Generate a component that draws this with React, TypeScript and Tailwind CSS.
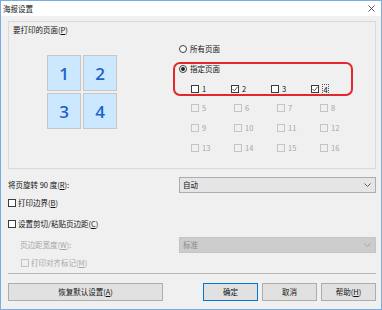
import React from "react";

const font = { fontFamily: '"Noto Sans CJK SC", "Noto Sans", sans-serif' };

function Check({ checked, disabled }: { checked?: boolean; disabled?: boolean }) {
  return (
    <div
      className={
        "w-[8px] h-[8px] border flex items-center justify-center shrink-0 " +
        (disabled ? "border-[#c4c4c4] bg-[#f0f0f0]" : "border-[#3c3c3c] bg-white")
      }
    >
      {checked && (
        <svg width="6" height="6" viewBox="0 0 6 6">
          <polyline points="0.5,3 2.3,4.8 5.6,0.8" fill="none" stroke="#555" strokeWidth="1" />
        </svg>
      )}
    </div>
  );
}

function Radio({ checked }: { checked?: boolean }) {
  return (
    <div className="w-[8px] h-[8px] rounded-full border border-[#3c3c3c] bg-white flex items-center justify-center shrink-0">
      {checked && <div className="w-[4px] h-[4px] rounded-full bg-[#222]" />}
    </div>
  );
}

function Acc({ k }: { k: string }) {
  return (
    <>
      (<span className="underline">{k}</span>)
    </>
  );
}

function PageCheck({ n, checked, disabled, focus }: { n: number; checked?: boolean; disabled?: boolean; focus?: boolean }) {
  return (
    <div className="w-[43px] flex items-center gap-[3px] h-[10px]">
      <Check checked={checked} disabled={disabled} />
      <span
        className={
          (disabled ? "text-[#a6a6a6] " : "text-[#111] ") +
          (focus ? "border border-dotted border-[#555] px-[0.5px] leading-[9px]" : "")
        }
      >
        {n}
      </span>
    </div>
  );
}

function Chevron({ color }: { color: string }) {
  return (
    <svg width="7" height="4" viewBox="0 0 7 4">
      <polyline points="0.5,0.5 3.5,3.5 6.5,0.5" fill="none" stroke={color} strokeWidth="0.9" />
    </svg>
  );
}

export default function App() {
  const tiles = [1, 2, 3, 4];
  return (
    <div
      className="w-[382px] h-[310px] border border-[#7aaee0] bg-[#f0f0f0] flex flex-col text-[7.5px] leading-[12px] text-[#111] overflow-hidden"
      style={font}
    >
      {/* title bar */}
      <div className="h-[15px] bg-white flex items-center justify-between pl-[2px] pr-[6px] shrink-0">
        <span className="text-[7.5px]">海报设置</span>
        <svg width="7" height="7" viewBox="0 0 7 7">
          <line x1="0.5" y1="0.5" x2="6.5" y2="6.5" stroke="#333" strokeWidth="0.8" />
          <line x1="6.5" y1="0.5" x2="0.5" y2="6.5" stroke="#333" strokeWidth="0.8" />
        </svg>
      </div>

      <div className="flex flex-col pl-[7px] pr-[5px]">
        {/* group box */}
        <div className="mt-[5px] h-[148px] border border-[#d9d9d9] flex">
          <div className="w-[164px] flex flex-col pl-[4px] pt-[2px]">
            <div className="h-[12px]">
              要打印的页面<Acc k="P" />
            </div>
            <div className="mt-[19px] ml-[34px] grid grid-cols-[34px_34px] gap-[2px]">
              {tiles.map((t) => (
                <div
                  key={t}
                  className="h-[36px] border border-[#c6c6c6] bg-[#cce8ff] flex items-center justify-center text-[17px] leading-none font-semibold text-[#1c62c8]"
                  style={{ fontFamily: '"Open Sans", "Noto Sans", sans-serif' }}
                >
                  {t}
                </div>
              ))}
            </div>
          </div>

          <div className="flex flex-col">
            <div className="mt-[21px] h-[12px] pl-[6px] flex items-center gap-[3px]">
              <Radio />
              <span>所有页面</span>
            </div>
            <div className="mt-[7px] w-[180px] h-[34px] border-2 border-[#e5262c] rounded-[7px] flex flex-col">
              <div className="h-[10px] pl-[4px] flex items-center gap-[3px]">
                <Radio checked />
                <span>指定页面</span>
              </div>
              <div className="mt-[10px] pl-[16px] flex">
                <PageCheck n={1} />
                <PageCheck n={2} checked />
                <PageCheck n={3} />
                <PageCheck n={4} checked focus />
              </div>
            </div>
            <div className="mt-[7px] pl-[18px] flex">
              <PageCheck n={5} disabled />
              <PageCheck n={6} disabled />
              <PageCheck n={7} disabled />
              <PageCheck n={8} disabled />
            </div>
            <div className="mt-[10px] pl-[18px] flex">
              <PageCheck n={9} disabled />
              <PageCheck n={10} disabled />
              <PageCheck n={11} disabled />
              <PageCheck n={12} disabled />
            </div>
            <div className="mt-[10px] pl-[18px] flex">
              <PageCheck n={13} disabled />
              <PageCheck n={14} disabled />
              <PageCheck n={15} disabled />
              <PageCheck n={16} disabled />
            </div>
          </div>
        </div>

        {/* rotate row */}
        <div className="mt-[8px] h-[16px] flex items-center justify-between">
          <span>
            将页旋转 90 度<Acc k="R" />:
          </span>
          <div className="w-[197px] h-[16px] border border-[#adadad] bg-[#e5e5e5] flex items-center justify-between pl-[3px] pr-[4px]">
            <span>自动</span>
            <Chevron color="#555" />
          </div>
        </div>

        <div className="mt-[5px] h-[10px] flex items-center gap-[2px]">
          <Check />
          <span>
            打印边界<Acc k="B" />
          </span>
        </div>

        <div className="mt-[11px] h-[10px] flex items-center gap-[2px]">
          <Check />
          <span>
            设置剪切/粘贴页边距<Acc k="C" />
          </span>
        </div>

        <div className="mt-[8px] h-[16px] flex items-center justify-between">
          <span className="pl-[12px] text-[#a6a6a6]">
            页边距宽度<Acc k="W" />:
          </span>
          <div className="w-[197px] h-[16px] border border-[#c4c4c4] bg-[#cccccc] flex items-center justify-between pl-[3px] pr-[4px] text-[#8a8a8a]">
            <span>标准</span>
            <Chevron color="#a0a0a0" />
          </div>
        </div>

        <div className="mt-[5px] h-[10px] pl-[13px] flex items-center gap-[2px]">
          <Check disabled />
          <span className="text-[#a6a6a6]">
            打印对齐标记<Acc k="M" />
          </span>
        </div>

        <div className="mt-[5px] h-[1px] bg-[#b9b9b9]" />

        <div className="mt-[9px] flex items-center justify-between">
          <div className="w-[155px] h-[18px] border border-[#adadad] bg-[#e1e1e1] flex items-center justify-center">
            恢复默认设置<Acc k="A" />
          </div>
          <div className="flex gap-[4px]">
            <div className="w-[55px] h-[18px] border border-[#0078d7] bg-[#e1e1e1] flex items-center justify-center">
              确定
            </div>
            <div className="w-[55px] h-[18px] border border-[#adadad] bg-[#e1e1e1] flex items-center justify-center">
              取消
            </div>
            <div className="w-[55px] h-[18px] border border-[#adadad] bg-[#e1e1e1] flex items-center justify-center">
              帮助<Acc k="H" />
            </div>
          </div>
        </div>
      </div>
    </div>
  );
}
